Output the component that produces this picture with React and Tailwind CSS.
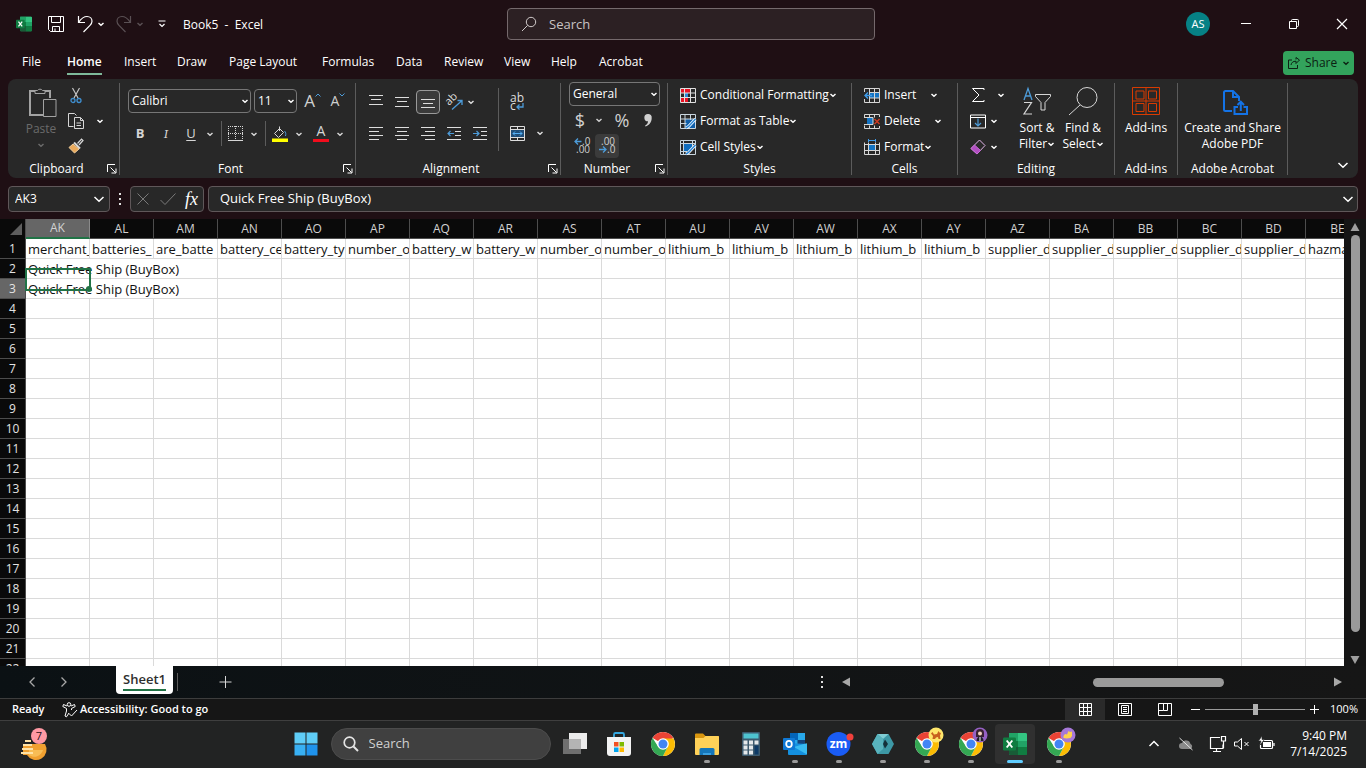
import { useState } from 'react'

const tabs = [
  { label: 'File', width: 'w-[45px]' },
  { label: 'Home', width: 'w-[57px]' },
  { label: 'Insert', width: 'w-[53px]' },
  { label: 'Draw', width: 'w-[52px]' },
  { label: 'Page Layout', width: 'w-[93px]' },
  { label: 'Formulas', width: 'w-[74px]' },
  { label: 'Data', width: 'w-[48px]' },
  { label: 'Review', width: 'w-[60px]' },
  { label: 'View', width: 'w-[47px]' },
  { label: 'Help', width: 'w-[48px]' },
  { label: 'Acrobat', width: 'w-[60px]' },
]

const columns = [
  { id: 'AK', title: 'merchant_' },
  { id: 'AL', title: 'batteries_' },
  { id: 'AM', title: 'are_batte' },
  { id: 'AN', title: 'battery_ce' },
  { id: 'AO', title: 'battery_ty' },
  { id: 'AP', title: 'number_o' },
  { id: 'AQ', title: 'battery_w' },
  { id: 'AR', title: 'battery_w' },
  { id: 'AS', title: 'number_o' },
  { id: 'AT', title: 'number_o' },
  { id: 'AU', title: 'lithium_b' },
  { id: 'AV', title: 'lithium_b' },
  { id: 'AW', title: 'lithium_b' },
  { id: 'AX', title: 'lithium_b' },
  { id: 'AY', title: 'lithium_b' },
  { id: 'AZ', title: 'supplier_d' },
  { id: 'BA', title: 'supplier_d' },
  { id: 'BB', title: 'supplier_d' },
  { id: 'BC', title: 'supplier_d' },
  { id: 'BD', title: 'supplier_d' },
  { id: 'BE', title: 'hazma' },
]

const rows = Array.from({ length: 22 }, (_, i) => i + 1)

function Svg({ w = 16, h = w, box, className = '', children }) {
  return (
    <svg
      width={w}
      height={h}
      viewBox={box || `0 0 ${w} ${h}`}
      fill="none"
      stroke="currentColor"
      className={`shrink-0 overflow-visible ${className}`}
      aria-hidden="true"
    >
      {children}
    </svg>
  )
}

function Chevron({ className = '' }) {
  return (
    <Svg w={8} className={className}>
      <path d="M1.500 3 4 5.200 6.500 3" strokeWidth="1.500" />
    </Svg>
  )
}

function BigChevron({ className = '' }) {
  return (
    <Svg w={12} className={className}>
      <path d="M1.500 4 6 8.200 10.500 4" strokeWidth="1.500" />
    </Svg>
  )
}

function Tool({ label, className = '', children }) {
  return (
    <button type="button" aria-label={label} className={`flex shrink-0 items-center justify-center ${className}`}>
      {children}
    </button>
  )
}

function Group({ label, width, launcher, children }) {
  return (
    <section className={`flex shrink-0 flex-col border-r border-[#5c5c5c] ${width}`}>
      <div className="min-h-0 flex-1">{children}</div>
      <div className="flex h-3 items-center text-[12px] leading-3">
        <span className="flex-1 text-center whitespace-nowrap">{label}</span>
        {launcher && (
          <Tool label={`${label} settings`} className="w-[14px]">
            <Svg w={10}>
              <path d="M.5 8V.5H8M3.500 3.500l5 5M9 4.500V9H4.500" />
            </Svg>
          </Tool>
        )}
      </div>
    </section>
  )
}

function Dropdown({ label, value, className }) {
  return (
    <div className={`relative shrink-0 ${className}`}>
      <select
        aria-label={label}
        className="block h-full w-full appearance-none rounded border border-[#767676] bg-[#282828] pl-[3px] text-[12px] leading-4 outline-none"
      >
        <option>{value}</option>
      </select>
      <Chevron className="pointer-events-none absolute top-1/2 right-[2px] -translate-y-1/2" />
    </div>
  )
}

function ExcelLogo({ size }) {
  return (
    <Svg w={size} box="0 0 24 24" className="stroke-none">
      <rect x="6" y="1" width="18" height="22" rx="1.500" fill="#21a366" />
      <path d="M6 1h9v8H6z" fill="#21a366" />
      <path d="M15 1h7.500A1.500 1.500 0 0 1 24 2.500V9h-9z" fill="#33c481" />
      <path d="M6 9h9v6H6z" fill="#107c41" />
      <path d="M15 9h9v6h-9z" fill="#21a366" />
      <path d="M6 15h18v6.500a1.500 1.500 0 0 1-1.500 1.500h-15A1.500 1.500 0 0 1 6 21.500z" fill="#185c37" />
      <path d="M15 15h9v6.500a1.500 1.500 0 0 1-1.500 1.500H15z" fill="#107c41" />
      <rect x="0" y="5.500" width="13" height="13" rx="1.200" fill="#107c41" />
      <path d="m3.700 8.500 5.600 7M9.300 8.500l-5.600 7" stroke="#fff" strokeWidth="1.900" />
    </Svg>
  )
}

function TitleBar() {
  return (
    <header className="flex h-12 shrink-0 items-center">
      <div className="flex min-w-0 flex-1 items-center">
        <span className="ml-4">
          <ExcelLogo size={16} />
        </span>
        <Tool label="Save" className="ml-4">
          <Svg w={16}>
            <path d="M.5.5h15v15H2.500l-2-2zM3.500.5v6h9v-6M4.500 15.500v-5h7v5M7 15.500v-3" />
          </Svg>
        </Tool>
        <Tool label="Undo" className="ml-[13px]">
          <Svg w={16} h={18}>
            <path d="M1.500 1v6.500H8M1.800 7.200C4 4 6.500 1.500 10 1.500c3.200 0 5 2.300 5 4.800 0 1.800-.8 2.900-2 4.100L6.500 17" strokeWidth="1.200" />
          </Svg>
        </Tool>
        <Chevron className="ml-1" />
        <Tool label="Redo" className="ml-[11px] text-[#5a5054]">
          <Svg w={16} h={18}>
            <path d="M14.500 1v6.500H8M14.200 7.200C12 4 9.500 1.500 6 1.500c-3.200 0-5 2.300-5 4.800 0 1.800.8 2.900 2 4.100L9.500 17" strokeWidth="1.200" />
          </Svg>
        </Tool>
        <Chevron className="ml-1 text-[#5a5054]" />
        <Tool label="Customize toolbar" className="ml-[14px]">
          <Svg w={8}>
            <path d="M.5 1h7M1.500 4 4 6.500 6.500 4" strokeWidth="1.200" />
          </Svg>
        </Tool>
        <h1 className="ml-[17px] pt-[2px] text-[12px] leading-4 whitespace-pre">Book5  -  Excel</h1>
      </div>
      <label className="flex h-8 w-[368px] shrink-0 items-center gap-3 rounded border border-[#75696c] bg-[#2c2023] pr-3 pl-[13px] text-[#d0caca]">
        <Svg w={16}>
          <circle cx="10" cy="6" r="4.700" />
          <path d="M6.600 9.400 1 15" />
        </Svg>
        <input
          type="text"
          placeholder="Search"
          aria-label="Search"
          className="w-full bg-transparent pt-px text-[13px] outline-none placeholder:text-[#c9c3c4]"
        />
      </label>
      <div className="flex w-[491px] shrink-0 items-center justify-end">
        <button type="button" className="flex h-6 w-6 items-center justify-center rounded-full bg-[#068185] text-[11px]">
          AS
        </button>
        <Tool label="Minimize" className="ml-3 h-8 w-12">
          <Svg w={10}>
            <path d="M0 4.500h10" />
          </Svg>
        </Tool>
        <Tool label="Restore" className="h-8 w-12">
          <Svg w={10}>
            <path d="M.5 2.500h7v7h-7zM2.500 2V1.500a1 1 0 0 1 1-1h5a1 1 0 0 1 1 1v5a1 1 0 0 1-1 1H8" />
          </Svg>
        </Tool>
        <Tool label="Close" className="h-8 w-12">
          <Svg w={12}>
            <path d="m1 1 10 10M11 1 1 11" strokeWidth="1.200" />
          </Svg>
        </Tool>
      </div>
    </header>
  )
}

function TabBar() {
  const [active, setActive] = useState('Home')

  return (
    <div className="flex h-[31px] shrink-0 items-start pr-3 pl-[22px]">
      <nav className="flex min-w-0 flex-1 text-[12px] leading-4">
        {tabs.map((tab) => (
          <div key={tab.label} className={`shrink-0 ${tab.width}`}>
            <button
              type="button"
              onClick={() => setActive(tab.label)}
              className={`h-[27px] border-b-2 pt-[6px] pb-[3px] whitespace-nowrap ${
                active === tab.label ? 'border-[#7fb89a] font-semibold' : 'border-transparent'
              }`}
            >
              {tab.label}
            </button>
          </div>
        ))}
      </nav>
      <button
        type="button"
        className="mt-[3px] flex h-6 w-[71px] shrink-0 items-center rounded bg-[#33a35c] pl-[5px] text-[12px] text-[#0c2113]"
      >
        <Svg w={12} className="mr-[5px]">
          <path d="M4 3H.5v8.500h9V8M3 8c.5-2.500 2-3.800 5-3.800V6.500L11.500 3 8 .5v2" />
        </Svg>
        Share
        <Chevron className="ml-[5px]" />
      </button>
    </div>
  )
}

function ClipboardGroup() {
  return (
    <Group label="Clipboard" width="w-28" launcher>
      <div className="flex pl-[10px]">
        <button type="button" className="flex w-[46px] flex-col items-center pt-1 text-[12px] leading-4 text-[#6b6b6b]">
          <Svg w={28} h={30} className="ml-1 text-[#a3a3a3]">
            <path d="M15 28H1V4h5M16 4h5v7" strokeWidth="2" />
            <path d="M6 6.500V3.500h2.500a3 3 0 0 1 5 0H16v3zM14.500 12.500h12.500v17H14.500z" />
          </Svg>
          <span className="mt-1">Paste</span>
          <Chevron className="mt-1" />
        </button>
        <div className="flex w-6 flex-col">
          <Tool label="Cut" className="h-[25px]">
            <Svg w={12} h={17}>
              <path d="M2.500 1 8 11M9.500 1 4 11" stroke="#c4c4c4" strokeWidth="1.200" />
              <circle cx="3" cy="13.500" r="2" stroke="#3f8fd0" strokeWidth="1.300" />
              <circle cx="9" cy="13.500" r="2" stroke="#3f8fd0" strokeWidth="1.300" />
            </Svg>
          </Tool>
          <Tool label="Copy" className="h-[25px]">
            <Svg w={16} className="text-[#d6d6d6]">
              <path d="M5.500 13.500h-5V.5h6l2 2M6.500 4.500h6l3 3v8h-9zM12.500 4.500v3h3M8.500 10h4.500M8.500 12.500h4.500" />
            </Svg>
          </Tool>
          <Tool label="Format Painter" className="h-[25px]">
            <Svg w={16}>
              <path d="m9.500 5.500 4-4.500 1.500 1.500-4 4.500" stroke="#d6d6d6" strokeWidth="1.200" />
              <path d="m6 4.500 6 6" stroke="#d6d6d6" strokeWidth="2" />
              <path d="M5 6 1 9.500l5.500 5.500L11 11z" fill="#eaaa5c" stroke="#f2cf9d" />
            </Svg>
          </Tool>
        </div>
        <Tool label="Copy options" className="mt-[25px] h-[25px] w-[23px]">
          <Chevron />
        </Tool>
      </div>
    </Group>
  )
}

function FontGroup() {
  return (
    <Group label="Font" width="w-[236px]" launcher>
      <div className="flex items-center pt-[6px] pl-2">
        <Dropdown label="Font name" value="Calibri" className="mr-[3px] h-6 w-[123px]" />
        <Dropdown label="Font size" value="11" className="h-6 w-[43px]" />
        <Tool label="Increase font size" className="w-7 pl-[3px] text-[17px] leading-6 text-[#d0d0d0]">
          A
          <Svg w={6} className="mb-3">
            <path d="M.5 4.500 3 2l2.500 2.500" stroke="#4d9bd8" />
          </Svg>
        </Tool>
        <Tool label="Decrease font size" className="w-[26px] text-[14px] leading-6 text-[#d0d0d0]">
          A
          <Svg w={6} className="mb-3">
            <path d="M.5 1.500 3 4l2.500-2.500" stroke="#4d9bd8" />
          </Svg>
        </Tool>
      </div>
      <div className="flex items-center pt-2 pl-[7px] text-[13px] text-[#d6d6d6]">
        <Tool label="Bold" className="w-[26px] font-bold">
          B
        </Tool>
        <Tool label="Italic" className="h-6 w-[26px] font-serif italic">
          I
        </Tool>
        <Tool label="Underline" className="w-6 underline underline-offset-2">
          U
        </Tool>
        <Tool label="Underline options" className="w-[14px]">
          <Chevron />
        </Tool>
        <span className="mx-1 h-[25px] w-px bg-[#5c5c5c]" />
        <Tool label="Borders" className="w-[19px]">
          <Svg w={15}>
            <path d="M0 .5h15M0 7.500h15M.5 0v15M7.500 0v15M14.500 0v15" strokeDasharray="1 1" />
            <path d="M0 14.500h15" />
          </Svg>
        </Tool>
        <Tool label="Border options" className="w-[18px]">
          <Chevron />
        </Tool>
        <span className="mr-[5px] ml-[2px] h-[25px] w-px bg-[#5c5c5c]" />
        <Tool label="Fill color" className="w-[18px]">
          <Svg w={16}>
            <path d="M7.500 2.500 2.500 7.500l4 4 5-5zM7.500 5V.5" />
            <path d="M12.500 5c1.500 1.500 1.500 3 1 5" stroke="#4d9bd8" />
            <path d="M0 12.500h16V16H0z" fill="#ffff00" stroke="none" />
          </Svg>
        </Tool>
        <Tool label="Fill color options" className="w-5">
          <Chevron />
        </Tool>
        <Tool label="Font color" className="w-6 flex-col text-[14px] leading-3">
          A
          <span className="mt-[2px] h-[3px] w-4 bg-[#f20d1d]" />
        </Tool>
        <Tool label="Font color options" className="w-[14px]">
          <Chevron />
        </Tool>
      </div>
    </Group>
  )
}

function AlignIcon({ d }) {
  return (
    <Svg w={14}>
      <path d={d} />
    </Svg>
  )
}

function AlignmentGroup() {
  return (
    <Group label="Alignment" width="w-[205px]" launcher>
      <div className="flex pl-[7px] text-[#dedede]">
        <div className="w-[135px] pt-[7px]">
          <div className="flex h-6 items-center">
            <Tool label="Top align" className="w-[26px]">
              <AlignIcon d="M0 .5h14M2 4.500h10M0 9.500h14" />
            </Tool>
            <Tool label="Middle align" className="w-[26px]">
              <AlignIcon d="M0 2.500h14M2 6.500h10M0 11.500h14" />
            </Tool>
            <Tool label="Bottom align" className="mx-px h-6 w-6 rounded border border-[#9a9a9a] bg-[#3a3a3a]">
              <AlignIcon d="M0 4.500h14M2 8.500h10M0 12.500h14" />
            </Tool>
            <Tool label="Orientation" className="w-7">
              <Svg w={18}>
                <text x="0" y="10" fontSize="11" fill="currentColor" stroke="none" transform="rotate(-45 5 8)">
                  ab
                </text>
                <path d="M6 16.500 15.500 8M11.500 7.500h4.500V12" stroke="#4d9bd8" strokeWidth="1.300" />
              </Svg>
            </Tool>
            <Chevron className="-ml-[2px]" />
          </div>
          <div className="mt-[7px] flex h-6 items-center">
            <Tool label="Align left" className="w-[26px]">
              <AlignIcon d="M0 1.500h14M0 5.500h10M0 9.500h14M0 13.500h10" />
            </Tool>
            <Tool label="Center" className="w-[26px]">
              <AlignIcon d="M0 1.500h14M2 5.500h10M0 9.500h14M2 13.500h10" />
            </Tool>
            <Tool label="Align right" className="w-[26px]">
              <AlignIcon d="M0 1.500h14M4 5.500h10M0 9.500h14M4 13.500h10" />
            </Tool>
            <Tool label="Decrease indent" className="w-[26px]">
              <Svg w={14}>
                <path d="M0 1.500h14M8 5.500h6M8 9.500h6M0 13.500h14" />
                <path d="M7 7.500H1M3.500 5 1 7.500 3.500 10" stroke="#4d9bd8" strokeWidth="1.200" />
              </Svg>
            </Tool>
            <Tool label="Increase indent" className="w-[26px]">
              <Svg w={14}>
                <path d="M0 1.500h14M8 5.500h6M8 9.500h6M0 13.500h14" />
                <path d="M0 7.500h6M3.500 5 6 7.500 3.500 10" stroke="#4d9bd8" strokeWidth="1.200" />
              </Svg>
            </Tool>
          </div>
        </div>
        <span className="mt-[5px] h-[63px] w-px bg-[#5c5c5c]" />
        <div className="pt-[7px] pl-[6px]">
          <Tool label="Wrap text" className="h-6 w-6">
            <Svg w={16} h={20}>
              <text x="1" y="10" fontSize="12" fill="currentColor" stroke="none">
                ab
              </text>
              <text x="1" y="18" fontSize="12" fill="currentColor" stroke="none">
                c
              </text>
              <path d="M14 11v4H8M10.500 12.500 8 15l2.500 2.500" stroke="#4d9bd8" strokeWidth="1.300" />
            </Svg>
          </Tool>
          <div className="mt-[7px] flex h-6 items-center">
            <Tool label="Merge and center" className="w-6">
              <Svg w={15}>
                <path d="M1 4h13v7H1z" fill="#1f4e79" stroke="none" />
                <path d="M.5.5h14v14H.5zM.5 3.500h14M.5 11.500h14M7.500.5v3M7.500 11.500v3" />
                <path d="M3 7.500h9M5 5.500l-2 2 2 2M10 5.500l2 2-2 2" stroke="#56b0f5" />
              </Svg>
            </Tool>
            <Tool label="Merge options" className="w-[22px]">
              <Chevron />
            </Tool>
          </div>
        </div>
      </div>
    </Group>
  )
}

function NumberGroup() {
  return (
    <Group label="Number" width="w-[107px]" launcher>
      <div className="-mt-px pl-2">
        <Dropdown label="Number format" value="General" className="h-6 w-[91px]" />
        <div className="mt-px flex h-[26px] items-center text-[18px] text-[#d0d0d0]">
          <Tool label="Currency" className="w-[22px]">
            $
          </Tool>
          <Tool label="Currency options" className="w-4">
            <Chevron />
          </Tool>
          <Tool label="Percent" className="w-[30px]">
            %
          </Tool>
          <Tool label="Comma style" className="w-[22px]">
            <Svg w={8} h={13}>
              <path d="M4 0a3.500 3.500 0 0 1 3.700 4C7.700 8 5 11.500 1.500 12.500L1 11.800C3 10.500 4 9 4 7.300A3.600 3.600 0 0 1 4 0z" fill="currentColor" stroke="none" />
            </Svg>
          </Tool>
        </div>
        <div className="mt-px flex items-center text-[#d0d0d0]">
          <Tool label="Increase decimal" className="h-6 w-[26px]">
            <Svg w={17} h={20}>
              <text x="8" y="9" fontSize="10" fill="currentColor" stroke="none">
                .0
              </text>
              <text x="2" y="17" fontSize="10" fill="currentColor" stroke="none">
                .00
              </text>
              <path d="M7.500 5.500H1M4 2.500l-3 3 3 3" stroke="#4d9bd8" strokeWidth="1.300" />
            </Svg>
          </Tool>
          <Tool label="Decrease decimal" className="h-6 w-6 rounded bg-[#3b3b3b]">
            <Svg w={17} h={20}>
              <text x="2" y="9" fontSize="10" fill="currentColor" stroke="none">
                .00
              </text>
              <text x="8" y="17" fontSize="10" fill="currentColor" stroke="none">
                .0
              </text>
              <path d="M0 13.500h7M4 10.500l3 3-3 3" stroke="#4d9bd8" strokeWidth="1.300" />
            </Svg>
          </Tool>
        </div>
      </div>
    </Group>
  )
}

function ConditionalIcon() {
  return (
    <Svg w={16} h={15}>
      <path d="M1 1h9v4H1zM1 9h7v5H1z" fill="#e81224" stroke="none" />
      <path d="M5 5h3v4H5z" fill="#2b88d8" stroke="none" />
      <path d="M.5.500h15v14H.5zM.5 5h15M.5 9.500h15M4.500.5v14M10.500.5v14" stroke="#e0e0e0" />
    </Svg>
  )
}

function FormatTableIcon() {
  return (
    <Svg w={16} h={15}>
      <path d="M5 5h10v9H5z" fill="#0f5ea8" stroke="none" />
      <path d="M.5.5h15v14H.5zM.5 5h15M.5 9.500h6M5 .5v14M10.500.5V6" stroke="#c9d6df" />
      <path d="M15.500 5 8.500 12.500l-2.500 1.500" stroke="#fff" strokeWidth="3" />
      <path d="M15.500 5 8.500 12.500l-2.500 1.500" stroke="#2b88d8" strokeWidth="1.500" />
    </Svg>
  )
}

function CellStylesIcon() {
  return (
    <Svg w={16} h={15}>
      <path d="M4 4h8v7H4z" fill="#0f6cbd" stroke="none" />
      <path d="M.5.5h15v14H.5zM.5 3.500h15M3.500.5v14M12.500.5v6M.5 11.500H7" stroke="#c9d6df" />
      <path d="M15.500 5 8.500 12.500l-2.500 1.500" stroke="#fff" strokeWidth="3" />
      <path d="M15.500 5 8.500 12.500l-2.500 1.500" stroke="#2b88d8" strokeWidth="1.500" />
    </Svg>
  )
}

function InsertIcon() {
  return (
    <Svg w={16} h={15}>
      <path d="M5 5h10v5H5z" fill="#1474c4" stroke="none" />
      <path d="M.5 4V.5h15v14H.5V11M5.500.5v14M10.500.5v14M5 4.500h10.500M5 10h10.500" stroke="#d6d6d6" />
      <path d="M8 7.500H1M4 4.500l-3 3 3 3" stroke="#3f9be8" strokeWidth="1.400" />
    </Svg>
  )
}

function DeleteIcon() {
  return (
    <Svg w={16} h={15}>
      <path d="M3 4h6v6H3z" fill="#1474c4" stroke="none" />
      <path d="M.5 3.500V.500h15V3M.5 11.500v3h15V12M5.500.5v3M10.500.5v3M5.500 11.500v3M10.500 11.500v3M0 3.500h9v7H0" stroke="#d6d6d6" />
      <path d="m10.500 5 5 5M15.500 5l-5 5" stroke="#d13b22" strokeWidth="1.400" />
    </Svg>
  )
}

function FormatIcon() {
  return (
    <Svg w={16} h={16}>
      <path d="M4 6h8v5H4z" fill="#1474c4" stroke="none" />
      <path d="M.5 3.500v12h15v-12M.5 5.500h15M.5 11.500h15M4.500 3.500v12M11.500 3.500v12" stroke="#d6d6d6" />
      <path d="M4.500 0v3M11.500 0v3M5 1.500h6" stroke="#3f9be8" />
    </Svg>
  )
}

function RowButton({ icon, label, gap = '' }) {
  return (
    <button type="button" className="flex h-[26px] items-center text-[12px] leading-4 whitespace-nowrap">
      {icon}
      <span className="ml-1">{label}</span>
      <Chevron className={gap} />
    </button>
  )
}

function StylesGroup() {
  return (
    <Group label="Styles" width="w-[184px]">
      <div className="-mt-px pl-3">
        <RowButton icon={<ConditionalIcon />} label="Conditional Formatting" />
        <RowButton icon={<FormatTableIcon />} label="Format as Table" />
        <RowButton icon={<CellStylesIcon />} label="Cell Styles" />
      </div>
    </Group>
  )
}

function CellsGroup() {
  return (
    <Group label="Cells" width="w-[106px]">
      <div className="-mt-px pl-3">
        <RowButton icon={<InsertIcon />} label="Insert" gap="ml-[14px]" />
        <RowButton icon={<DeleteIcon />} label="Delete" gap="ml-[14px]" />
        <RowButton icon={<FormatIcon />} label="Format" />
      </div>
    </Group>
  )
}

function EditingGroup() {
  return (
    <Group label="Editing" width="w-[157px]">
      <div className="flex pl-3">
        <div className="-mt-px w-[44px]">
          <Tool label="AutoSum" className="h-[26px] gap-[11px]">
            <Svg w={16}>
              <path d="M14 3V1.500H2.500L9 8l-6.500 6.500H14V13" />
            </Svg>
            <Chevron />
          </Tool>
          <Tool label="Fill" className="h-[26px] gap-1">
            <Svg w={16} h={15}>
              <path d="M.5 1v13h15V1zM0 3.500h16" />
              <path d="M8 4.500V12M5 9l3 3 3-3" stroke="#4d9bd8" strokeWidth="1.200" />
            </Svg>
            <Chevron />
          </Tool>
          <Tool label="Clear" className="h-[26px] gap-1">
            <Svg w={16}>
              <path d="M9.500 1 15 6.500 7 15 1 9.500z" stroke="#e2b6e8" />
              <path d="m4.500 6 6 5.500L7 15 1 9.500z" fill="#b14fc1" stroke="#c76ad6" />
            </Svg>
            <Chevron />
          </Tool>
        </div>
        <button type="button" className="flex w-[46px] flex-col items-center pt-1 text-[12px] leading-4">
          <Svg w={28} className="text-[#d6d6d6]">
            <path d="M1 13 5 1.500 9 13M2.500 9h5" stroke="#4d9bd8" strokeWidth="1.300" />
            <path d="M1 15.500h7.500L1 27h8" strokeWidth="1.200" />
            <path d="M12.500 7.500h15v2l-5.500 6V23h-4v-7.500l-5.500-6z" />
          </Svg>
          <span className="mt-[5px] whitespace-nowrap">Sort &amp;</span>
          <span className="flex items-center">
            Filter
            <Chevron />
          </span>
        </button>
        <button type="button" className="flex w-[46px] flex-col items-center pt-1 text-[12px] leading-4">
          <Svg w={30} h={28} className="text-[#d6d6d6]">
            <circle cx="19" cy="10.500" r="10" />
            <path d="M12 18 1 28" />
          </Svg>
          <span className="mt-[5px] whitespace-nowrap">Find &amp;</span>
          <span className="flex items-center">
            Select
            <Chevron />
          </span>
        </button>
      </div>
    </Group>
  )
}

function Ribbon() {
  return (
    <div className="mx-2 flex h-[99px] shrink-0 overflow-hidden rounded-lg bg-[#282828] pt-1 pb-[3px]">
      <ClipboardGroup />
      <FontGroup />
      <AlignmentGroup />
      <NumberGroup />
      <StylesGroup />
      <CellsGroup />
      <EditingGroup />
      <Group label="Add-ins" width="w-[63px]">
        <button type="button" className="flex w-full flex-col items-center pt-1 text-[12px] leading-4">
          <Svg w={28} className="text-[#d83b01]">
            <path d="M.5.5h27v27H.5zM14 .5v27M.5 14h27M4 4h8v8H4zM16.500 4h8v8h-8zM4 16.500h8v8H4zM16.500 16.500h8v8h-8z" />
          </Svg>
          <span className="mt-[5px]">Add-ins</span>
        </button>
      </Group>
      <Group label="Adobe Acrobat" width="w-[110px]">
        <button type="button" className="flex w-full flex-col items-center pt-1 text-[12px] leading-4">
          <Svg w={26} h={28} className="ml-1 text-[#1473e6]">
            <path d="M10 24H3.500a1.500 1.500 0 0 1-1.500-1.500v-17A1.500 1.500 0 0 1 3.500 4H11l6 6v4M11 4v6h6" strokeWidth="2" />
            <path d="M16 20h-3.500v7H25v-7h-3.500M18.800 24v-9M15.500 18l3.300-3.300L22 18" strokeWidth="2" />
          </Svg>
          <span className="mt-[5px] whitespace-nowrap">Create and Share</span>
          <span>Adobe PDF</span>
        </button>
      </Group>
      <div className="flex flex-1 items-end justify-end pr-[9px] pb-1">
        <Tool label="Collapse ribbon">
          <BigChevron />
        </Tool>
      </div>
    </div>
  )
}

function FormulaBar() {
  return (
    <div className="flex h-[41px] shrink-0 items-center px-2">
      <div className="flex h-[26px] w-[102px] items-center rounded border border-[#5f5759] bg-[#282828] pr-1">
        <input
          aria-label="Name box"
          defaultValue="AK3"
          className="min-w-0 flex-1 bg-transparent pt-px pl-[6px] text-[12px] outline-none"
        />
        <BigChevron />
      </div>
      <Svg w={4} h={12} className="mx-2">
        <path d="M1 0h2v2H1zM1 5h2v2H1zM1 10h2v2H1z" fill="#e0e0e0" stroke="none" />
      </Svg>
      <div className="flex h-[26px] w-[74px] items-center justify-between rounded border border-[#5f5759] bg-[#282828] px-[5px]">
        <Tool label="Cancel" className="text-[#7a7a7a]">
          <Svg w={14}>
            <path d="m1.500 1.500 11 11M12.500 1.500l-11 11" />
          </Svg>
        </Tool>
        <Tool label="Enter" className="text-[#7a7a7a]">
          <Svg w={16} h={14}>
            <path d="m.5 8 4.500 4.500L15.500 1.500" />
          </Svg>
        </Tool>
        <Tool label="Insert function" className="font-['Liberation_Serif',serif] text-[18px] leading-5 italic">
          fx
        </Tool>
      </div>
      <div className="ml-1 flex h-[26px] min-w-0 flex-1 items-center rounded border border-[#5f5759] bg-[#282828] pr-[3px]">
        <input
          aria-label="Formula bar"
          defaultValue="Quick Free Ship (BuyBox)"
          className="min-w-0 flex-1 bg-transparent pt-px pl-[11px] text-[13px] outline-none"
        />
        <BigChevron />
      </div>
    </div>
  )
}

function Sheet() {
  return (
    <main className="flex min-h-0 flex-1 bg-[#0a0a0a]">
      <div className="relative min-w-0 flex-1 overflow-hidden bg-white">
        <table className="w-[1370px] table-fixed border-separate border-spacing-0 text-[13px] leading-[18px] text-[#111]">
          <colgroup>
            <col className="w-[26px]" />
            {columns.map((col) => (
              <col key={col.id} className="w-16" />
            ))}
          </colgroup>
          <thead>
            <tr className="h-5 bg-[#0a0a0a] text-[12px] text-[#d2d2d2]">
              <th className="border-r border-[#4d4d4d] p-0">
                <Svg w={12} className="ml-[10px]">
                  <path d="M12 0v12H0z" fill="#5e5e5e" stroke="none" />
                </Svg>
              </th>
              {columns.map((col) => (
                <th
                  key={col.id}
                  className={`border-r p-0 font-normal ${
                    col.id === 'AK' ? 'border-b-2 border-r-[#8a8a8a] border-b-[#217346] bg-[#666]' : 'border-b border-[#4d4d4d] pt-px'
                  }`}
                >
                  {col.id}
                </th>
              ))}
            </tr>
          </thead>
          <tbody>
            {rows.map((row) => (
              <tr key={row} className="h-5">
                <th
                  className={`border-r border-b border-[#4d4d4d] p-0 pt-px text-center text-[12px] font-normal text-[#e4e4e4] ${
                    row === 3 ? 'bg-[#666]' : 'bg-[#0a0a0a]'
                  }`}
                >
                  {row}
                </th>
                {row === 1 &&
                  columns.map((col) => (
                    <td key={col.id} className="overflow-hidden border-r border-b border-[#dadada] p-0 pt-px pl-[2px] whitespace-nowrap">
                      {col.title}
                    </td>
                  ))}
                {(row === 2 || row === 3) && (
                  <td colSpan={3} className="border-r border-b border-[#dadada] p-0 pt-px pl-[2px] whitespace-nowrap">
                    Quick Free Ship (BuyBox)
                  </td>
                )}
                {row > 1 &&
                  columns
                    .slice(row < 4 ? 3 : 0)
                    .map((col) => <td key={col.id} className="border-r border-b border-[#dadada] p-0" />)}
              </tr>
            ))}
          </tbody>
        </table>
        {/* active cell frame with its fill handle */}
        <div className="pointer-events-none absolute top-[49px] left-[25px] h-[23px] w-[66px] border-2 border-[#217346]">
          <span className="absolute -right-[3px] -bottom-[3px] h-[6px] w-[6px] rounded-sm bg-[#217346]" />
        </div>
      </div>
      <div className="flex w-[22px] shrink-0 flex-col items-center gap-1 bg-[#151515] pt-1 text-[#9e9e9e]">
        <Svg w={10} h={8}>
          <path d="M5 0 9.500 8H.5z" fill="currentColor" stroke="none" />
        </Svg>
        <span className="w-[9px] flex-1 rounded-full bg-[#9a9a9a]" />
        <Svg w={10} h={8} className="mt-5 mb-[2px]">
          <path d="M5 8 9.500 0H.5z" fill="currentColor" stroke="none" />
        </Svg>
      </div>
    </main>
  )
}

function SheetTabs() {
  return (
    <div className="flex h-8 shrink-0 items-center bg-linear-to-r from-[#0b1114] to-[#161616] text-[#a8a8a8]">
      <Tool label="Previous sheet" className="ml-[26px] w-3">
        <Svg w={8} h={12}>
          <path d="M6.500 1.500 2 6l4.500 4.500" strokeWidth="1.300" />
        </Svg>
      </Tool>
      <Tool label="Next sheet" className="ml-5 w-3">
        <Svg w={8} h={12}>
          <path d="M1.500 1.500 6 6l-4.500 4.500" strokeWidth="1.300" />
        </Svg>
      </Tool>
      <button type="button" className="mb-1 ml-[46px] h-7 w-[57px] rounded-b bg-white text-[13px] font-semibold text-[#2e2e2e]">
        <span className="inline-block border-b-2 border-[#217346] leading-5">Sheet1</span>
      </button>
      <span className="ml-1 h-[18px] w-px bg-[#5c5c5c]" />
      <Tool label="New sheet" className="ml-[41px] text-[#d6d6d6]">
        <Svg w={12}>
          <path d="M6.500 0v12M.5 6h12" />
        </Svg>
      </Tool>
      <div className="flex-1" />
      <Svg w={4} h={12} className="mr-[18px]">
        <path d="M1 0h2v2H1zM1 5h2v2H1zM1 10h2v2H1z" fill="#e0e0e0" stroke="none" />
      </Svg>
      <div className="mr-6 flex w-[500px] items-center">
        <Svg w={8} h={10}>
          <path d="M0 5 8 .5v9z" fill="currentColor" stroke="none" />
        </Svg>
        <span className="ml-[243px] h-[9px] w-[131px] rounded-full bg-[#9a9a9a]" />
        <span className="flex-1" />
        <Svg w={8} h={10}>
          <path d="M8 5 0 .5v9z" fill="currentColor" stroke="none" />
        </Svg>
      </div>
    </div>
  )
}

function StatusBar() {
  return (
    <div className="flex h-[22px] shrink-0 items-center border-t border-[#3d3d3d] bg-[#161616] pr-2 pl-3 text-[11px] leading-4">
      <span className="w-[50px] pb-[2px] font-semibold">Ready</span>
      <Svg w={16} className="mr-[2px]">
        <circle cx="7" cy="2.500" r="1.800" />
        <path d="M5 4 1.500 2.500.8 4.500 4.500 6.500V9L3 14l1.500.8L7 11M9 4l3.500-1.500.7 2L9.500 6.500V8M7 11.500 9.500 14 15 8" />
      </Svg>
      <span className="pb-[2px] font-semibold">Accessibility: Good to go</span>
      <div className="flex-1" />
      <Tool label="Normal view" className="h-[21px] w-10 bg-[#2a2a2a]">
        <Svg w={13}>
          <path d="M.5.5h12v12H.5zM.5 4.500h12M.5 8.500h12M4.500.5v12M8.500.5v12" />
        </Svg>
      </Tool>
      <Tool label="Page layout view" className="h-[21px] w-10">
        <Svg w={14} h={13}>
          <path d="M.5.5h13v12H.5zM3.500 2.500h7v8h-7zM5 4.500h4M5 6.500h4M5 8.500h4" />
        </Svg>
      </Tool>
      <Tool label="Page break view" className="h-[21px] w-10">
        <Svg w={14} h={13}>
          <path d="M.5.500h13v12H.5zM5.500.5v7h4v-7M.5 7.500h5" />
        </Svg>
      </Tool>
      <Tool label="Zoom out" className="ml-[6px]">
        <Svg w={9}>
          <path d="M0 4.500h9" />
        </Svg>
      </Tool>
      <input
        type="range"
        aria-label="Zoom"
        min="10"
        max="190"
        defaultValue="100"
        className="mx-[5px] h-3 w-[100px] appearance-none bg-[linear-gradient(#9a9a9a,#9a9a9a)] bg-[length:100%_1px] bg-center bg-no-repeat [&::-webkit-slider-thumb]:h-[11px] [&::-webkit-slider-thumb]:w-[5px] [&::-webkit-slider-thumb]:appearance-none [&::-webkit-slider-thumb]:bg-[#b0b0b0]"
      />
      <Tool label="Zoom in">
        <Svg w={9}>
          <path d="M0 4.500h9M4.500 0v9" />
        </Svg>
      </Tool>
      <span className="ml-[11px] w-7 pb-[2px] text-right whitespace-nowrap">100%</span>
    </div>
  )
}

function ChromeLogo({ badge, mark }) {
  return (
    <Svg w={32} className="stroke-none">
      <circle cx="16" cy="16" r="12" fill="#fff" />
      <path d="M16 16 5.600 10A12 12 0 0 1 26.400 10z" fill="#ea4335" />
      <path d="M16 10.500h10.600A12 12 0 0 1 16 28l4.800-9.300z" fill="#fbbc04" />
      <path d="m11.200 18.700-5.600-8.700A12 12 0 0 0 16 28l4.800-9.300z" fill="#34a853" />
      <circle cx="16" cy="16" r="5.800" fill="#fff" />
      <circle cx="16" cy="16" r="4.500" fill="#4285f4" />
      {badge && <circle cx="25" cy="7" r="7.500" fill={badge} />}
      {mark}
    </Svg>
  )
}

const dogMark = (
  <path d="M20 5.500 21.500 4l1.500 2.500 3-.5 1.500-3 1 1.500 1.500.5-1 2.500.5 3.500h-2l-.500-2-2 .5-1 1.500h-2.500l.5-3z" fill="#c8611e" />
)
const personMark = (
  <g>
    <path d="M21 9V5a4 4 0 0 1 8 0v4z" fill="#3a2233" />
    <circle cx="25" cy="5.500" r="2" fill="#f4d3c0" />
    <path d="M21.500 13c0-6 7-6 7 0z" fill="#1f1f2b" />
    <path d="M24.500 9h1v4h-1z" fill="#fff" />
  </g>
)
const catMark = <path d="M20.500 8 22 6l2 .5L25.500 3 27 4l2-.5v4.500l-1.500 2-4 .5-3-.5z" fill="#ffd24a" />

const apps = [
  {
    name: 'Task View',
    icon: (
      <Svg w={26} className="stroke-none">
        <path d="M7 2h18v16H7z" fill="#ececec" />
        <path d="M1 8h18v15H1z" fill="#6f6f6f" />
        <path d="M7 8h12v10H7z" fill="#b4b4b4" />
      </Svg>
    ),
  },
  {
    name: 'Microsoft Store',
    icon: (
      <Svg w={24} className="stroke-none">
        <path d="M7 6V2.500A1.500 1.500 0 0 1 8.500 1h7A1.500 1.500 0 0 1 17 2.500V6" stroke="#35a8e0" strokeWidth="1.800" />
        <path d="M0 5h24v16a3 3 0 0 1-3 3H3a3 3 0 0 1-3-3z" fill="#f3f3f3" />
        <path d="M7 10h4.500v4.500H7z" fill="#f25022" />
        <path d="M12.500 10H17v4.500h-4.500z" fill="#7fba00" />
        <path d="M7 15.500h4.500V20H7z" fill="#00a4ef" />
        <path d="M12.500 15.500H17V20h-4.500z" fill="#ffb900" />
      </Svg>
    ),
  },
  { name: 'Chrome', icon: <ChromeLogo /> },
  {
    name: 'File Explorer',
    running: true,
    icon: (
      <Svg w={24} className="stroke-none">
        <path d="M0 2.500A1 1 0 0 1 1 1.500h7l2.500 2.500H23a1 1 0 0 1 1 1V8H0z" fill="#d9960f" />
        <path d="M0 6h8.500l2-2H23a1 1 0 0 1 1 1v17a1 1 0 0 1-1 1H1a1 1 0 0 1-1-1z" fill="#ffd158" />
        <path d="M4.500 23v-5.500a1.500 1.500 0 0 1 1.500-1.500h12a1.500 1.500 0 0 1 1.500 1.500V23z" fill="#1576b9" />
        <path d="M8 23v-2h8v2z" fill="#3aa0e0" />
      </Svg>
    ),
  },
  {
    name: 'Calculator',
    icon: (
      <Svg w={18} h={24} className="stroke-none">
        <rect width="18" height="24" rx="1" fill="#3c5a6e" />
        <path d="M1.500 1.500h15v5h-15z" fill="#4ec3d0" />
        <path d="M1.500 8.500h4v4h-4zM7 8.500h4v4H7zM12.500 8.500h4v4h-4zM1.500 13.500h4v4h-4zM7 13.500h4v4H7zM1.500 18.500h4v4h-4zM7 18.500h4v4H7z" fill="#e4e8ea" />
        <path d="M12.500 13.500h4v9h-4z" fill="#0d3a66" />
      </Svg>
    ),
  },
  {
    name: 'Outlook',
    running: true,
    icon: (
      <Svg w={24} className="stroke-none">
        <path d="M7 1h15v13H7z" fill="#28a8ea" />
        <path d="M7 1h8v7H7z" fill="#0364b8" />
        <path d="M14.500 8H22v7h-7.500z" fill="#14447d" />
        <path d="M5 11l19 1v10a1 1 0 0 1-1 1H6a1 1 0 0 1-1-1z" fill="#1490df" />
        <path d="M24 11v11.500L11 15z" fill="#50d9ff" opacity=".6" />
        <rect y="6" width="12" height="12" rx="1" fill="#0f78d4" />
        <ellipse cx="6" cy="12" rx="2.800" ry="3.200" stroke="#fff" strokeWidth="1.800" />
      </Svg>
    ),
  },
  {
    name: 'Zoom',
    running: true,
    icon: (
      <Svg w={28} h={24} className="stroke-none">
        <circle cx="13.500" cy="12" r="12" fill="#1a5cf5" />
        <text x="13.500" y="16" textAnchor="middle" fontSize="12" fontWeight="700" fill="#fff">
          zm
        </text>
        <circle cx="25" cy="5" r="3.500" fill="#f1403c" />
      </Svg>
    ),
  },
  {
    name: 'Hex',
    running: true,
    icon: (
      <Svg w={22} className="stroke-none">
        <path d="M5.500 1h11L22 11l-5.500 10h-11L0 11z" fill="#3d98a5" />
        <path d="M5.500 1h11L11 6z" fill="#7fcdd4" />
        <path d="M5.500 1 11 6v10l-5.500 5L0 11z" fill="#59b3bd" />
        <path d="M13 6.500 16 11l-3 4.500-2-4.500z" fill="#14303a" />
      </Svg>
    ),
  },
  { name: 'Chrome profile 1', running: true, icon: <ChromeLogo badge="#ffe66b" mark={dogMark} /> },
  { name: 'Chrome profile 2', running: true, icon: <ChromeLogo badge="#9561c4" mark={personMark} /> },
  { name: 'Excel', active: true, icon: <ExcelLogo size={24} /> },
  { name: 'Chrome profile 3', running: true, icon: <ChromeLogo badge="#a678d8" mark={catMark} /> },
]

function Taskbar() {
  return (
    <footer className="grid h-12 shrink-0 grid-cols-[1fr_auto_1fr] items-center border-t border-[#3f3f3f] bg-[#222323]">
      <Tool label="Widgets" className="mb-1 ml-4 w-8">
        <Svg w={30} h={32} className="stroke-none">
          <path d="M6 17h22a10 10 0 0 1-18 11H6z" fill="#f0a030" />
          <path d="M12 23h14a9 9 0 0 1-14 5z" fill="#f8bd55" />
          <path d="M8 14h6M6 18h9M5 22h11M4 26h12" stroke="#ffe3a6" strokeWidth="1.800" />
          <circle cx="22" cy="9" r="8" fill="#ff99a4" />
          <text x="22" y="13" textAnchor="middle" fontSize="11" fill="#2b1014">
            7
          </text>
        </Svg>
      </Tool>
      <div className="flex items-center pr-[2px] pb-px">
        <Tool label="Start" className="mr-[3px] h-11 w-11">
          <Svg w={24} className="stroke-none">
            <path d="M.5.500H11.500V11.500H.5zM12.500.5h11v11h-11z" fill="#5fcdf7" />
            <path d="M.5 12.500h11v11H.5z" fill="#38b0f3" />
            <path d="M12.500 12.500h11v11h-11z" fill="#1f93ec" />
          </Svg>
        </Tool>
        <label className="mr-[2px] flex h-8 w-[220px] items-center gap-[10px] rounded-full border border-[#4c4c4c] bg-[#404040] px-[11px]">
          <Svg w={16} className="text-[#e4e4e4]">
            <circle cx="6.500" cy="6.500" r="5.300" strokeWidth="1.700" />
            <path d="m10.500 10.500 4.500 4.500" strokeWidth="1.900" />
          </Svg>
          <input
            type="text"
            placeholder="Search"
            aria-label="Search Windows"
            className="min-w-0 flex-1 bg-transparent text-[13px] outline-none placeholder:text-[#d0d0d0]"
          />
        </label>
        {apps.map((app) => (
          <button
            key={app.name}
            type="button"
            aria-label={app.name}
            className={`relative mx-[2px] flex h-10 w-10 items-center justify-center rounded ${app.active ? 'bg-[#303030]' : ''}`}
          >
            {app.icon}
            {app.running && <span className="absolute bottom-px left-[17px] h-[3px] w-[6px] rounded-full bg-[#9a9a9a]" />}
            {app.active && <span className="absolute bottom-px left-3 h-[3px] w-4 rounded-full bg-[#60cdff]" />}
          </button>
        ))}
      </div>
      <div className="flex items-center justify-end pr-[19px] pb-px">
        <Svg w={12} className="mr-[18px]">
          <path d="M1.500 8 6 3.500 10.500 8" strokeWidth="1.500" />
        </Svg>
        <Svg w={16} className="mr-4">
          <path d="M4 13a3 3 0 0 1 0-6 4.500 4.500 0 0 1 8.500 1A2.600 2.600 0 0 1 12 13z" fill="#8a8a8a" stroke="none" />
          <path d="m1.500 2 13 12" stroke="#e4e4e4" />
        </Svg>
        <Svg w={16} h={17} className="mr-2">
          <path d="M10 1.500H.5v11h12.500V8.500M6.500 12.500v3M3 15.500h8" strokeWidth="1.200" />
          <path d="M11.500.5h4V5h-4zM13.500 5v7" strokeWidth="1.200" />
        </Svg>
        <Svg w={16} className="mr-2">
          <path d="M.5 6v4H3.500L7.500 13.500v-11L3.500 6zM10.500 6l4 4M14.500 6l-4 4" />
        </Svg>
        <Svg w={17} h={16} className="mr-[15px]">
          <path d="M5 6h8v5H5z" fill="currentColor" stroke="none" />
          <path d="M6 4.500h7.500a1 1 0 0 1 1 1v6a1 1 0 0 1-1 1H3.500a1 1 0 0 1-1-1V9M16 7v3" strokeWidth="1.200" />
          <path d="m4 0-3.500 5H3L1.500 9.500 6.500 3.500H4z" fill="#fff" stroke="#222323" strokeWidth=".6" />
        </Svg>
        <div className="text-right text-[12px] leading-4">
          <p>9:40 PM</p>
          <p>7/14/2025</p>
        </div>
      </div>
    </footer>
  )
}

export default function App() {
  return (
    <div className="flex h-screen flex-col overflow-hidden bg-[#1f0f14] font-['Open_Sans','Noto_Sans',sans-serif] text-white">
      <TitleBar />
      <TabBar />
      <Ribbon />
      <FormulaBar />
      <Sheet />
      <SheetTabs />
      <StatusBar />
      <Taskbar />
    </div>
  )
}
